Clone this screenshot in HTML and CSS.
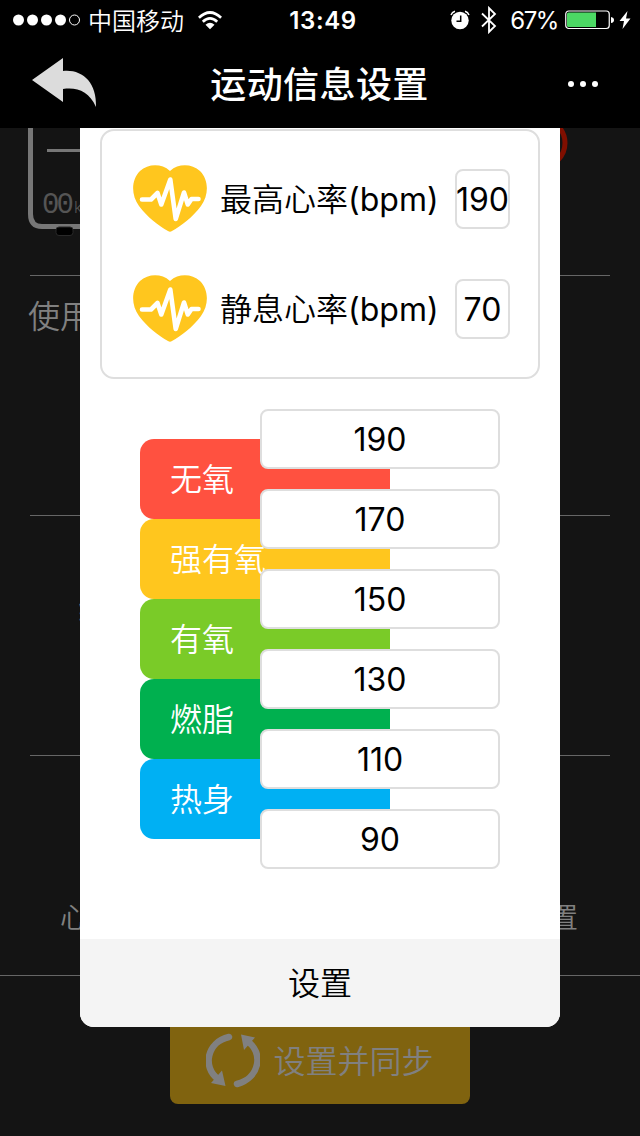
FILE: index.html
```html
<!DOCTYPE html>
<html lang="zh-CN">
  <head>
    <meta charset="UTF-8" />
    <title>运动信息设置</title>
    <link rel="stylesheet" href="styles.css">
  </head>
  <body>
    <header class="top">
      <div class="status-bar">
        <div class="carrier">
          <svg class="signal" width="68" height="14" viewBox="0 0 68 14">
            <g fill="#fff">
              <circle cx="5.5" cy="7" r="5.5" />
              <circle cx="19.5" cy="7" r="5.5" />
              <circle cx="33.5" cy="7" r="5.5" />
              <circle cx="47.5" cy="7" r="5.5" />
            </g>
            <circle cx="61.5" cy="7" r="5" fill="none" stroke="#fff" stroke-width="1" />
          </svg>
          <span class="carrier-name">中国移动</span>
          <svg class="wifi" width="24" height="19" viewBox="0 0 24 19">
            <g fill="none" stroke="#fff" stroke-width="2.7">
              <path d="M0.9 6.8 Q12 -3.8 23.1 6.8" />
              <path d="M4.8 10.8 Q12 4.1 19.2 10.8" />
            </g>
            <path d="M7.5 13.7 Q12 9.8 16.5 13.7 L12 18.2 Z" fill="#fff" />
          </svg>
        </div>
        <div class="clock">13:49</div>
        <div class="power">
          <svg class="alarm" width="20" height="20" viewBox="0 0 20 20">
            <circle cx="10" cy="10.5" r="8.7" fill="#fff" />
            <path d="M1 5 Q2 2 5 1.2 M19 5 Q18 2 15 1.2" fill="none" stroke="#fff" stroke-width="1.4" />
            <path d="M10.7 5.5 V11.2 H6.5" fill="none" stroke="#000" stroke-width="1.5" />
          </svg>
          <svg class="bluetooth" width="16" height="28" viewBox="0 0 16 28">
            <path d="M1 7.5 L14 20 L8 26 V2 L14 8 L1 20.5" fill="none" stroke="#fff" stroke-width="1.8" />
          </svg>
          <span class="percent">67%</span>
          <svg class="battery" width="49" height="20" viewBox="0 0 49 20">
            <rect x="0.75" y="1" width="43.5" height="17.5" rx="3" fill="none" stroke="#fff" stroke-width="1.2" />
            <path d="M3.5 2.5 H31 V17 H3.5 Q2 17 2 15.5 V4 Q2 2.5 3.5 2.5 Z" fill="#4cd964" />
            <path d="M46 7 Q49 7.5 49 10 Q49 12.5 46 13 Z" fill="#fff" />
          </svg>
          <svg class="bolt" width="12" height="20" viewBox="0 0 12 20">
            <path d="M8.5 1 L0.5 11 H5 L3.5 19 L11.5 8.5 H7 Z" fill="#fff" />
          </svg>
        </div>
      </div>
      <div class="nav">
        <svg class="back" width="66" height="50" viewBox="0 0 66 50">
          <path d="M0 22 L31 0 V13 C50 11 65 24 64 49 C57 33 45 29 31 31 V44 Z" fill="#dcdcdc" />
        </svg>
        <h1 class="title">运动信息设置</h1>
        <div class="more"><i></i><i></i><i></i></div>
      </div>
    </header>

    <main class="page">
      <section class="section section-device">
        <svg class="device" width="582" height="115" viewBox="-2 0 582 115">
          <path d="M0.5 0 V86 Q0.5 98.5 12 98.5 H60" fill="none" stroke="#777" stroke-width="5" />
          <path d="M17 22.5 H60" stroke="#777" stroke-width="3" />
          <rect x="26" y="99" width="17" height="8.5" rx="3" fill="#000" stroke="#292929" />
          <circle cx="511" cy="15" r="24" fill="none" stroke="#800f00" stroke-width="5" />
          <text class="lcd" x="12" y="85" textLength="32">00</text>
          <text class="lcd-unit" x="44" y="85">k</text>
        </svg>
      </section>
      <section class="section section-use">使用</section>
      <section class="section section-train">练</section>
      <section class="section section-heart">
        <span>心</span>
        <span>置</span>
      </section>
      <div class="sync-bar">
        <div class="sync-button">
          <svg width="54" height="56" viewBox="0 0 54 56">
            <g fill="none" stroke="#808080" stroke-width="6.5">
              <path d="M23 5 C1 10 -4 35 12 47" stroke-linecap="round" />
              <path d="M31 52 C54 46 58 20 41 9" stroke-linecap="round" />
            </g>
            <path d="M5 51 L19.5 54 L16 38.5 Z M35 2.5 L49 5.5 L38 18 Z" fill="#808080" />
          </svg>
          <span>设置并同步</span>
        </div>
      </div>
    </main>

    <div class="modal">
      <div class="rates">
        <div class="rate">
          <svg class="heart" width="76" height="68" viewBox="0 0 76 68">
            <path d="M38 6 C47 -2 60 -1 68 6 C77 15 77 30 69 41 C61 52 49 61 40 66 Q38 67.5 36 66 C27 61 15 52 7 41 C-1 30 -1 15 8 6 C16 -1 29 -2 38 6 Z" fill="#ffc61e" />
            <path d="M10 34.5 H19 L25.5 28 L29.3 39.5 L38.3 14.5 L43.7 54 L52 27.5 L55.8 39.5 L59.5 34 H66.5" fill="none" stroke="#fff" stroke-width="4.6" stroke-linecap="round" stroke-linejoin="round" />
          </svg>
          <span class="rate-label">最高心率<span class="unit">(bpm)</span></span>
          <div class="field">190</div>
        </div>
        <div class="rate">
          <svg class="heart" width="76" height="68" viewBox="0 0 76 68">
            <path d="M38 6 C47 -2 60 -1 68 6 C77 15 77 30 69 41 C61 52 49 61 40 66 Q38 67.5 36 66 C27 61 15 52 7 41 C-1 30 -1 15 8 6 C16 -1 29 -2 38 6 Z" fill="#ffc61e" />
            <path d="M10 34.5 H19 L25.5 28 L29.3 39.5 L38.3 14.5 L43.7 54 L52 27.5 L55.8 39.5 L59.5 34 H66.5" fill="none" stroke="#fff" stroke-width="4.6" stroke-linecap="round" stroke-linejoin="round" />
          </svg>
          <span class="rate-label">静息心率<span class="unit">(bpm)</span></span>
          <div class="field">70</div>
        </div>
      </div>

      <div class="zones">
        <div class="zone-list">
          <div class="zone zone-anaerobic">无氧</div>
          <div class="zone zone-strong">强有氧</div>
          <div class="zone zone-aerobic">有氧</div>
          <div class="zone zone-fat">燃脂</div>
          <div class="zone zone-warmup">热身</div>
        </div>
        <div class="limits">
          <div class="field">190</div>
          <div class="field">170</div>
          <div class="field">150</div>
          <div class="field">130</div>
          <div class="field">110</div>
          <div class="field">90</div>
        </div>
      </div>

      <div class="confirm">设置</div>
    </div>
  </body>
</html>
```

FILE: styles.css
```css
* {
  box-sizing: border-box;
}

body {
  margin: 0;
  height: 1136px;
  position: relative;
  overflow: hidden;
  background: #141414;
  font-family: Inter, "Noto Sans CJK SC", sans-serif;
  font-size: 32px;
  font-weight: 350;
}

svg {
  display: block;
  flex: none;
}

.top {
  height: 128px;
  background: #000;
  color: #fff;
}

.status-bar {
  height: 40px;
  padding: 0 9px 0 13px;
  display: grid;
  grid-template-columns: 1fr auto 1fr;
  align-items: center;
  font-size: 24px;
  line-height: 40px;
}

.carrier,
.power {
  display: flex;
  align-items: center;
}

.carrier-name {
  margin: 0 14px 0 7px;
  padding-top: 3px;
  line-height: 37px;
}

.clock {
  padding: 2px 0 0 2px;
  line-height: 38px;
  font-weight: 600;
  letter-spacing: 0.6px;
}

.power {
  justify-content: flex-end;
}

.bluetooth {
  margin: 0 13px 0 11px;
}

.percent {
  margin-right: 7px;
  padding-top: 2px;
  line-height: 38px;
  font-weight: 400;
  letter-spacing: -1.4px;
}

.bolt {
  margin-left: 5px;
}

.nav {
  height: 88px;
  padding: 0 42px 0 32px;
  display: grid;
  grid-template-columns: 66px 1fr 30px;
  align-items: center;
}

.back {
  margin-top: -3px;
}

.title {
  margin: 0;
  padding: 2px 27px 0 0;
  font-size: 36px;
  font-weight: 500;
  line-height: 86px;
  letter-spacing: 0.4px;
  text-align: center;
}

.more {
  display: flex;
  justify-content: space-between;
}

.more i {
  width: 6px;
  height: 6px;
  border-radius: 50%;
  background: #fff;
}

.page {
  color: #808080;
}

.section {
  height: 240px;
  margin: 0 30px;
  border-bottom: 1px solid #666;
}

.section-device {
  height: 148px;
}

.device {
  margin-left: -2px;
}

.lcd {
  fill: #555;
  font-family: "Liberation Mono", monospace;
  font-size: 29px;
}

.lcd-unit {
  fill: #555;
  font-size: 16px;
}

.section-use {
  padding-top: 17px;
  line-height: 48px;
  text-indent: -2px;
}

.section-train {
  padding: 69px 0 0 48px;
  line-height: 48px;
}

.section-heart {
  height: 220px;
  margin: 0;
  padding: 141px 62px 0 60px;
  display: flex;
  justify-content: space-between;
  font-size: 28px;
  line-height: 42px;
}

.sync-bar {
  display: flex;
  justify-content: center;
  padding-top: 40px;
}

.sync-button {
  width: 300px;
  height: 88px;
  border-radius: 8px;
  background: #80630f;
  display: flex;
  align-items: center;
  justify-content: center;
  gap: 13px;
}

.sync-button span {
  padding-bottom: 3px;
}

.modal {
  position: absolute;
  top: 128px;
  left: 80px;
  width: 480px;
  height: 899px;
  border-radius: 0 0 14px 14px;
  overflow: hidden;
  background: #fff;
  color: #000;
  display: flex;
  flex-direction: column;
}

.rates {
  height: 250px;
  margin: 1px 20px 0;
  padding: 13px 28px 0 30px;
  border: 2px solid #dedede;
  border-radius: 14px;
}

.rate {
  height: 110px;
  display: flex;
  align-items: center;
}

.rate-label {
  flex: 1;
  margin-left: 12px;
  padding-bottom: 4px;
  white-space: nowrap;
}

.unit {
  font-weight: 400;
}

.field {
  height: 60px;
  border: 2px solid #dedede;
  border-radius: 8px;
  background: #fff;
  display: flex;
  align-items: center;
  justify-content: center;
  font-weight: 400;
}

.rate .field {
  width: 55px;
}

.zones {
  margin: 30px 60px 0;
  display: grid;
  grid-template-columns: 120px 240px;
}

.zone-list {
  padding-top: 30px;
}

.zone {
  width: 250px;
  height: 80px;
  padding: 1px 0 0 30px;
  border-radius: 14px 0 0 14px;
  color: #fff;
  line-height: 80px;
}

.zone-anaerobic {
  background: #ff5140;
}

.zone-strong {
  background: #ffc61e;
}

.zone-aerobic {
  background: #7acb28;
}

.zone-fat {
  background: #00b04f;
}

.zone-warmup {
  background: #00b0f3;
}

.limits {
  display: flex;
  flex-direction: column;
  gap: 20px;
  z-index: 1;
}

.confirm {
  height: 88px;
  margin-top: auto;
  padding-top: 1px;
  background: #f4f4f4;
  line-height: 88px;
  text-align: center;
}
```
